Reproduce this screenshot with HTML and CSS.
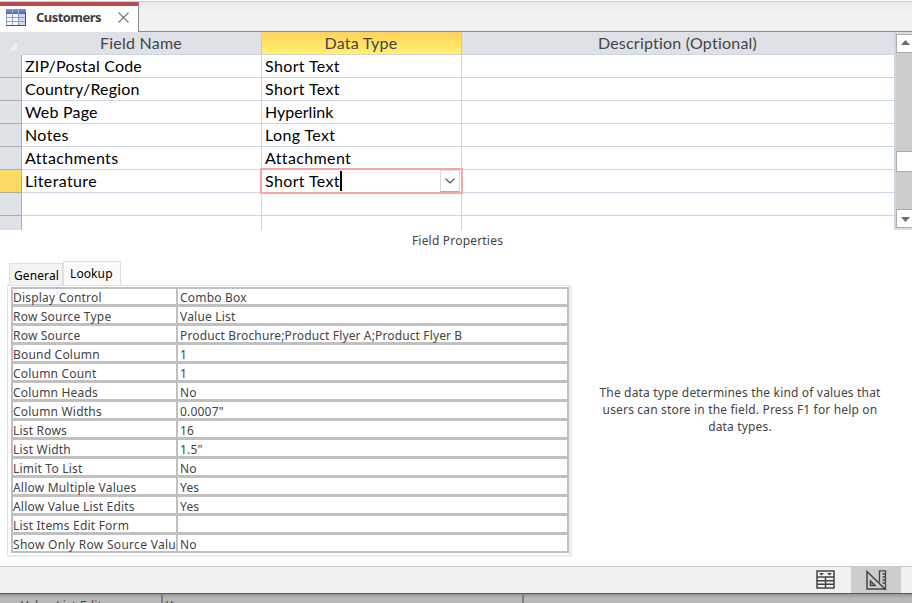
FILE: index.html
```html
<!DOCTYPE html>
<html lang="en">
<head>
<meta charset="utf-8">
<title>Customers</title>
<link rel="stylesheet" href="styles.css">
</head>
<body>
<div class="tabs">
  <div class="tab">
    <svg class="tabicon" width="20" height="17" viewBox="0 0 20 17" shape-rendering="crispEdges">
      <defs><linearGradient id="h" x1="0" x2="0" y1="0" y2="1"><stop offset="0" stop-color="#7f98d0"/><stop offset="1" stop-color="#4f68a8"/></linearGradient></defs>
      <rect width="20" height="17" fill="#8f9fc0"/><rect width="20" height="5" fill="url(#h)"/>
      <path fill="#f4f7fb" d="M1 5h5v3H1zM7 5h5v3H7zM1 9h5v3H1zM7 9h5v3H7zM1 13h5v3H1zM7 13h5v3H7z"/>
      <path fill="#cbd8ef" d="M13 5h6v3h-6zM13 9h6v3h-6zM13 13h6v3h-6z"/>
      <path fill="#9db0da" d="M6 0h1v5H6zM12 0h1v5h-1z"/>
      <path fill="#435580" d="M0 16h20v1H0zM19 4h1v13h-1z"/>
    </svg>
    <span class="tabname">Customers</span>
    <svg class="close" width="11" height="11" viewBox="0 0 11 11"><path d="M.5.5l10 10M10.500.5l-10 10" stroke="#777" stroke-width="1.100"/></svg>
  </div>
  <div class="strip"></div>
</div>
<div class="design">
  <div class="grid">
    <div class="corner"><svg width="11" height="11" viewBox="0 0 11 11"><path d="M11 0v11H0z" fill="#eceff1" stroke="#cdd2d7" stroke-width=".6"/></svg></div>
    <div class="head">Field Name</div><div class="head active">Data Type</div><div class="head desc">Description (Optional)</div>
    <div class="sel"></div><div class="cell long">ZIP/Postal Code</div><div class="cell">Short Text</div><div class="cell last"></div>
    <div class="sel"></div><div class="cell long">Country/Region</div><div class="cell">Short Text</div><div class="cell last"></div>
    <div class="sel"></div><div class="cell long">Web Page</div><div class="cell tight">Hyperlink</div><div class="cell last"></div>
    <div class="sel"></div><div class="cell">Notes</div><div class="cell">Long Text</div><div class="cell last"></div>
    <div class="sel"></div><div class="cell">Attachments</div><div class="cell">Attachment</div><div class="cell last"></div>
    <div class="sel current"></div><div class="cell">Literature</div>
    <div class="cell editing">Short Text<i class="caret"></i>
      <div class="focus"><div class="drop"><svg width="10" height="6" viewBox="0 0 10 6"><path d="M.6.6L5 5 9.400.6" fill="none" stroke="#444" stroke-width="1.200"/></svg></div></div>
    </div><div class="cell last"></div>
    <div class="sel"></div><div class="cell"></div><div class="cell"></div><div class="cell last"></div>
    <div class="sel"></div><div class="cell"></div><div class="cell"></div><div class="cell last"></div>
  </div>
  <div class="scroll">
    <div class="btn"><svg width="9" height="5" viewBox="0 0 9 5"><path d="M0 5L4.500 0 9 5z" fill="#6b6b6b"/></svg></div>
    <div class="track"><div class="thumb"></div></div>
    <div class="btn down"><svg width="9" height="5" viewBox="0 0 9 5"><path d="M0 0h9L4.500 5z" fill="#6b6b6b"/></svg></div>
  </div>
</div>
<div class="lower">
  <div class="title">Field Properties</div>
  <div class="pane">
    <div class="left">
      <div class="ptabs"><div class="ptab general">General</div><div class="ptab lookup">Lookup</div></div>
      <div class="frame"><div class="props">
        <div class="first">Display Control</div><div class="first v">Combo Box</div>
        <div>Row Source Type</div><div class="v">Value List</div>
        <div>Row Source</div><div class="v src">Product Brochure;Product Flyer A;Product Flyer B</div>
        <div>Bound Column</div><div class="v">1</div>
        <div>Column Count</div><div class="v">1</div>
        <div>Column Heads</div><div class="v">No</div>
        <div>Column Widths</div><div class="v">0.0007"</div>
        <div>List Rows</div><div class="v">16</div>
        <div>List Width</div><div class="v">1.5"</div>
        <div>Limit To List</div><div class="v">No</div>
        <div>Allow Multiple Values</div><div class="v">Yes</div>
        <div>Allow Value List Edits</div><div class="v">Yes</div>
        <div>List Items Edit Form</div><div class="v"></div>
        <div class="wide">Show Only Row Source Valu</div><div class="v">No</div>
      </div></div>
    </div>
    <div class="help">The data type determines the kind of values that<br>users can store in the field. Press F1 for help on<br>data types.</div>
  </div>
</div>
<div class="status">
  <div class="view sheet"><svg width="19" height="19" viewBox="0 0 19 19"><path d="M1 1h17v17H1zM1 7h17M1 10.700h17M1 14.300h17M9.500 7v11" fill="none" stroke="#444" stroke-width="1.500"/><path d="M3 3h5L5.500 5.500zM11 3h5l-2.500 2.500z" fill="#444"/></svg></div>
  <div class="view on"><svg width="21" height="20" viewBox="0 0 21 20"><path d="M1 1.500V19h18zM4.500 11v4.500H9z" fill="none" stroke="#444" stroke-width="1.500"/><path d="M13.500 12.500V.8h6v18.400H18M16.500 4h3M16.500 7h3M16.500 10h3M16.500 13h3" fill="none" stroke="#444" stroke-width="1.300"/></svg></div>
</div>
<div class="under"><div class="u1">Value List Edits</div><div class="u2">Yes</div><div class="u3"></div></div>
</body>
</html>
```
FILE: styles.css
```css
* { box-sizing: border-box; }
body { margin: 0; width: 912px; height: 603px; overflow: hidden; background: #fff; font: 12px/16px "Noto Sans", sans-serif; letter-spacing: .2px; color: #444; display: flex; flex-direction: column; }
svg { display: block; }
.tabs { height: 32px; display: flex; padding-top: 2px; background: linear-gradient(#fbfaf9 0 1px, #cfcdcb 1px 2px, #ebe9e8 2px, #f3f1ef 12px); flex: none; }
.tab { width: 139px; height: 30px; border-top: 4px solid #bc4b50; border-right: 1px solid #858b92; background: #fff; display: flex; align-items: flex-start; padding: 3px 0 0 6px; }
.tabname { font: bold 13px/17px "Noto Sans", sans-serif; letter-spacing: -.55px; color: #3c3c3c; margin-left: 10px; width: 72px; white-space: nowrap; }
.close { margin: 3px 0 0 10px; }
.strip { flex: 1; border-bottom: 1px solid #858b92; }
.design { height: 198px; display: flex; flex: none; }
.grid { width: 894px; display: grid; grid-template-columns: 22px 240px 200px 1fr; grid-auto-rows: 23px; overflow: hidden; font: 16px/21px Lato, sans-serif; letter-spacing: .37px; color: #000; }
.corner { background: #dee2e6; padding: 8px 0 0 7px; }
.head { background: #dee2e6; color: #444; text-align: center; letter-spacing: .22px; border-right: 1px solid #c3cad4; border-bottom: 1px solid #cfd6e3; padding-right: 1px; }
.head.active { background: linear-gradient(#ffd35a, #fff073); }
.head.desc { border-right: 0; }
.sel { background: #dee2e6; border-right: 1px solid #aaadb2; border-bottom: 1px solid #aaadb2; }
.sel.current { background: #ffd966; }
.cell { border-right: 1px solid #cfd6e3; border-bottom: 1px solid #cfd6e3; padding-left: 3px; white-space: nowrap; }
.cell.last { border-right: 0; }
.cell.long { letter-spacing: .2px; }
.cell.tight { letter-spacing: .02px; }
.editing { position: relative; }
.caret { display: inline-block; width: 2px; height: 20px; background: #000; vertical-align: top; margin-top: 1px; }
.focus { position: absolute; inset: -2px -2px -2px -2px; border: 2px solid #f7a6aa; display: flex; justify-content: flex-end; z-index: 2; padding-right: 1px; }
.drop { width: 20px; height: 22px; border: 1px solid #d9dcdf; border-bottom-color: #aaa; background: #fff; padding: 7px 0 0 4px; }
.scroll { width: 18px; padding: 2px 0 2px 0; border-left: 2px solid #cfd6e3; background: #d9dce1; display: flex; flex-direction: column; }
.btn { height: 19px; width: 20px; border: 1px solid #adadad; background: #fff; padding: 5px 0 0 4px; flex: none; }
.btn.down { padding-top: 7px; }
.track { flex: 1; background: #cdcdcd; padding-top: 98px; }
.thumb { width: 20px; height: 21px; border: 1px solid #adadad; background: #fff; }
.lower { height: 336px; flex: none; padding-top: 2px; }
.title { text-align: center; width: 912px; padding-left: 3px; height: 29px; line-height: 17px; }
.pane { display: flex; }
.left { width: 565px; margin-left: 7px; }
.ptabs { display: flex; align-items: flex-end; height: 24px; padding-left: 2px; color: #000; letter-spacing: .1px; }
.ptab { border: 1px solid #e0e0e0; border-bottom: 0; background: #f3f3f3; white-space: nowrap; }
.general { width: 54px; height: 22px; padding-left: 4px; line-height: 24px; }
.lookup { width: 58px; height: 24px; padding-left: 6px; line-height: 23px; background: #fafafa; }
.frame { border: 1px solid #e2e2e2; border-width: 1px 3px 2px 1px; padding: 1px 0 2px 3px; height: 272px; border-right-color: #eee; border-bottom-color: #eee; }
.props { width: 558px; height: 266px; background: #c0c0c0; padding: 2px; display: grid; grid-template-columns: 163px 389px; column-gap: 2px; row-gap: 3px; grid-template-rows: 15px repeat(13, 16px); }
.props div { background: #fff; line-height: 19px; white-space: nowrap; height: 16px; }
.props .first { height: 15px; line-height: 17px; }
.props .v { padding-left: 2px; }
.props .src { letter-spacing: .13px; }
.props .wide { letter-spacing: .3px; }
.help { width: 320px; margin: 123px 0 0 8px; text-align: center; line-height: 17px; letter-spacing: .17px; white-space: nowrap; }
.status { height: 27px; flex: none; background: #f3f1ef; border-top: 1px solid #c8c6c4; display: flex; justify-content: flex-end; padding-right: 11px; }
.view { width: 50px; height: 26px; display: flex; align-items: flex-start; justify-content: center; padding-top: 3px; }
.view.sheet { padding-right: 2px; }
.view.on { background: #cfcdcb; }
.under { height: 10px; flex: none; border-top: 1px solid #9f3a3d; background: linear-gradient(#949494, #b8b8b8 4px); display: flex; overflow: hidden; color: #444; font-size: 12px; line-height: 16px; white-space: nowrap; }
.u1 { width: 163px; border-right: 2px solid #808080; padding: 4px 0 0 21px; }
.u2 { width: 361px; border-right: 2px solid #808080; padding: 4px 0 0 3px; }
.u3 { flex: 1; }
```
